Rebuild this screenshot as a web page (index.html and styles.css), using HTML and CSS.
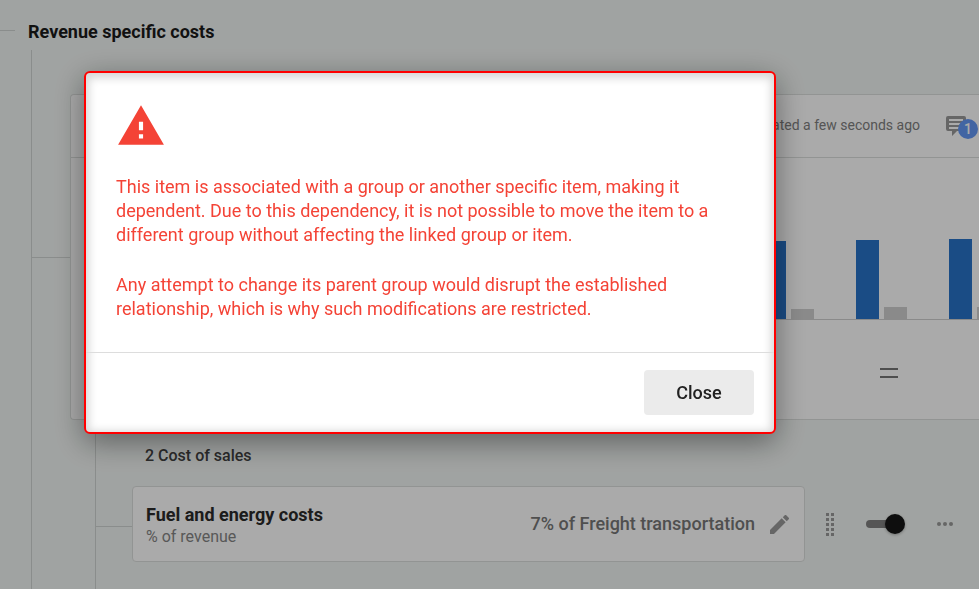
FILE: index.html
```html
<!DOCTYPE html>
<html lang="en">
<head>
<meta charset="utf-8">
<title>Revenue specific costs</title>
<link rel="stylesheet" href="styles.css">
</head>
<body>
<main class="page">
  <header class="section-head">
    <span class="stub"></span>
    <h1>Revenue specific costs</h1>
  </header>
  <div class="tree">
    <section class="node">
      <span class="link"></span>
      <article class="card chart-card">
        <header class="card-head">
          <span class="updated">Updated a few seconds ago</span>
          <button class="comment" aria-label="Comments">
            <svg viewBox="0 0 20 20" width="20" height="20"><path fill-rule="evenodd" d="M2 0h16a2 2 0 0 1 2 2v11a2 2 0 0 1-2 2h-7l-5 5V15H2a2 2 0 0 1-2-2V2a2 2 0 0 1 2-2zM3 3v2h14V3zM3 7v2h14V7zM3 11v2h11v-2z"/></svg>
            <span class="count">1</span>
          </button>
        </header>
        <div class="chart">
          <div class="pair"><i class="bar main h-low"></i><i class="bar minor m-low"></i></div>
          <div class="pair"><i class="bar main h-mid"></i><i class="bar minor m-high"></i></div>
          <div class="pair"><i class="bar main h-high"></i><i class="bar minor m-high"></i></div>
        </div>
        <div class="grip"><button class="equals" aria-label="Resize"></button></div>
      </article>
    </section>
    <section class="subtree">
      <h2>2 Cost of sales</h2>
      <div class="node">
        <span class="link short"></span>
        <article class="card item">
          <div class="item-name">
            <h3>Fuel and energy costs</h3>
            <p>% of revenue</p>
          </div>
          <span class="formula">7% of Freight transportation</span>
          <button class="edit" aria-label="Edit">
            <svg viewBox="3 3 18 18" width="19" height="19"><path d="M3 17.25V21h3.75L17.81 9.94l-3.75-3.75L3 17.25zM20.71 7.04a1 1 0 0 0 0-1.41l-2.34-2.34a1 1 0 0 0-1.41 0l-1.83 1.83 3.75 3.75 1.83-1.83z"/></svg>
          </button>
        </article>
        <div class="tools">
          <button aria-label="Drag">
            <svg viewBox="0 0 8 23" width="8" height="23"><path d="M0 0h3v3H0zM5 0h3v3H5zM0 5h3v3H0zM5 5h3v3H5zM0 10h3v3H0zM5 10h3v3H5zM0 15h3v3H0zM5 15h3v3H5zM0 20h3v3H0zM5 20h3v3H5z"/></svg>
          </button>
          <input class="toggle" type="checkbox" checked aria-label="Enabled">
          <button aria-label="More">
            <svg viewBox="0 0 16 4" width="16" height="4"><circle cx="2" cy="2" r="2"/><circle cx="8" cy="2" r="2"/><circle cx="14" cy="2" r="2"/></svg>
          </button>
        </div>
      </div>
    </section>
  </div>
</main>
<div class="overlay">
  <div class="dialog" role="alertdialog" aria-modal="true" aria-describedby="message">
    <div class="dialog-body">
      <svg class="warning" viewBox="0 0 24 24" width="50" height="50" aria-hidden="true"><path d="M1 21h22L12 2 1 21zm12-3h-2v-2h2v2zm0-4h-2v-4h2v4z"/></svg>
      <div id="message">
        <p>This item is associated with a group or another specific item, making it dependent. Due to this dependency, it is not possible to move the item to a different group without affecting the linked group or item.</p>
        <p>Any attempt to change its parent group would disrupt the established relationship, which is why such modifications are restricted.</p>
      </div>
    </div>
    <footer class="dialog-foot"><button class="close">Close</button></footer>
  </div>
</div>
</body>
</html>
```

FILE: styles.css
```css
* { box-sizing: border-box; }
html, body { height: 100%; }
body {
  margin: 0;
  overflow: hidden;
  background: #f1f5f3;
  color: #333;
  font-family: Roboto, "Liberation Sans", sans-serif;
}
h1, h2, h3, p { margin: 0; }
button {
  display: flex;
  padding: 0;
  border: 0;
  background: none;
  font: inherit;
  color: inherit;
}
.page { display: flex; flex-direction: column; min-height: 100%; }

.section-head { display: flex; align-items: center; height: 50px; padding-top: 14px; }
.stub { width: 15px; height: 4px; margin-right: 13px; border-top: 1px solid #d0d4d2; }
h1 { font-size: 18px; line-height: 24px; font-weight: 700; color: #1a1a1a; }

.tree { flex: 1; display: flex; flex-direction: column; margin-left: 31px; padding-top: 44px; border-left: 1px solid #d0d4d2; }
.node { display: flex; align-items: center; }
.link { flex: none; width: 38px; height: 1px; background: #d0d4d2; }
.link.short { width: 36px; height: 5px; background: none; border-bottom: 1px solid #d0d4d2; }
.card { flex: 1; min-width: 0; background: #fff; border: 1px solid #dcdfdd; border-radius: 4px; }

.chart-card { overflow: hidden; border-right: 0; border-radius: 4px 0 0 4px; }
.card-head { display: flex; justify-content: flex-end; align-items: center; height: 63px; border-bottom: 1px solid #dcdfdd; }
.updated { margin-right: 26px; padding-bottom: 2px; font-size: 14px; line-height: 20px; color: #808080; }
.comment { position: relative; width: 33px; fill: #999; }
.count {
  position: absolute;
  top: 3px;
  right: 1px;
  width: 20px;
  height: 20px;
  border-radius: 50%;
  background: #6498f5;
  color: #fff;
  font-size: 14px;
  font-weight: 500;
  line-height: 20px;
  text-align: center;
}
.chart { display: flex; justify-content: flex-end; align-items: flex-end; gap: 42px; height: 162px; margin: 0 -21px 0 42px; border-bottom: 1px solid #d0d0d0; }
.pair { display: flex; align-items: flex-end; gap: 5px; }
.bar { width: 23px; }
.main { background: #2873c8; }
.minor { background: #d0d0d0; }
.h-low { height: 78px; }
.h-mid { height: 79px; }
.h-high { height: 80px; }
.m-low { height: 10px; }
.m-high { height: 12px; }
.grip { display: flex; justify-content: flex-end; align-items: center; height: 99px; padding: 6px 81px 0 0; }
.equals { width: 18px; height: 10px; border: solid #757575; border-width: 2px 0; }

.subtree { flex: 1; margin-left: 63px; padding-top: 24px; border-left: 1px solid #d0d4d2; }
h2 { margin: 0 0 18px 49px; font-size: 16px; line-height: 24px; font-weight: 500; color: #404040; }
.item { display: flex; align-items: center; height: 76px; padding: 0 15px 0 13px; }
.item-name { flex: 1; padding-top: 4px; }
h3 { font-size: 18px; line-height: 22px; font-weight: 700; color: #2b2b2b; }
.item p { font-size: 16px; line-height: 22px; color: #858585; }
.formula { margin-right: 15px; font-size: 18px; line-height: 24px; font-weight: 500; color: #777; }
.edit { fill: #999; }
.tools { display: flex; align-items: center; gap: 32px; padding: 0 26px 0 21px; fill: #999; }
.toggle {
  appearance: none;
  display: flex;
  align-items: center;
  width: 39px;
  height: 20px;
  margin: 0;
}
.toggle::before { content: ""; width: 30px; height: 8px; border-radius: 4px; background: #808080; }
.toggle::after { content: ""; width: 20px; height: 20px; margin-left: -11px; border-radius: 50%; background: #161616; box-shadow: 0 1px 3px rgba(0, 0, 0, .3); }

.overlay { position: fixed; inset: 0; padding: 71px 84px; background: rgba(0, 0, 0, .333); }
.dialog {
  max-width: 692px;
  background: #fff;
  border: 2px solid #f00;
  border-radius: 6px;
  box-shadow: 0 8px 30px rgba(0, 0, 0, .42), inset 0 2px 8px 3px rgba(0, 0, 0, .16);
}
.dialog-body { padding: 28px 30px 31px; color: #f44336; font-size: 18px; line-height: 24px; }
.warning { display: block; margin-bottom: 24px; fill: #f44336; }
.dialog-body p + p { margin-top: 26px; }
.dialog-foot { display: flex; justify-content: flex-end; padding: 17px 20px; border-top: 1px solid #ddd; }
.close { justify-content: center; align-items: center; width: 110px; height: 45px; border-radius: 4px; background: #ebebeb; color: #212121; font-size: 18px; font-weight: 500; }
```
